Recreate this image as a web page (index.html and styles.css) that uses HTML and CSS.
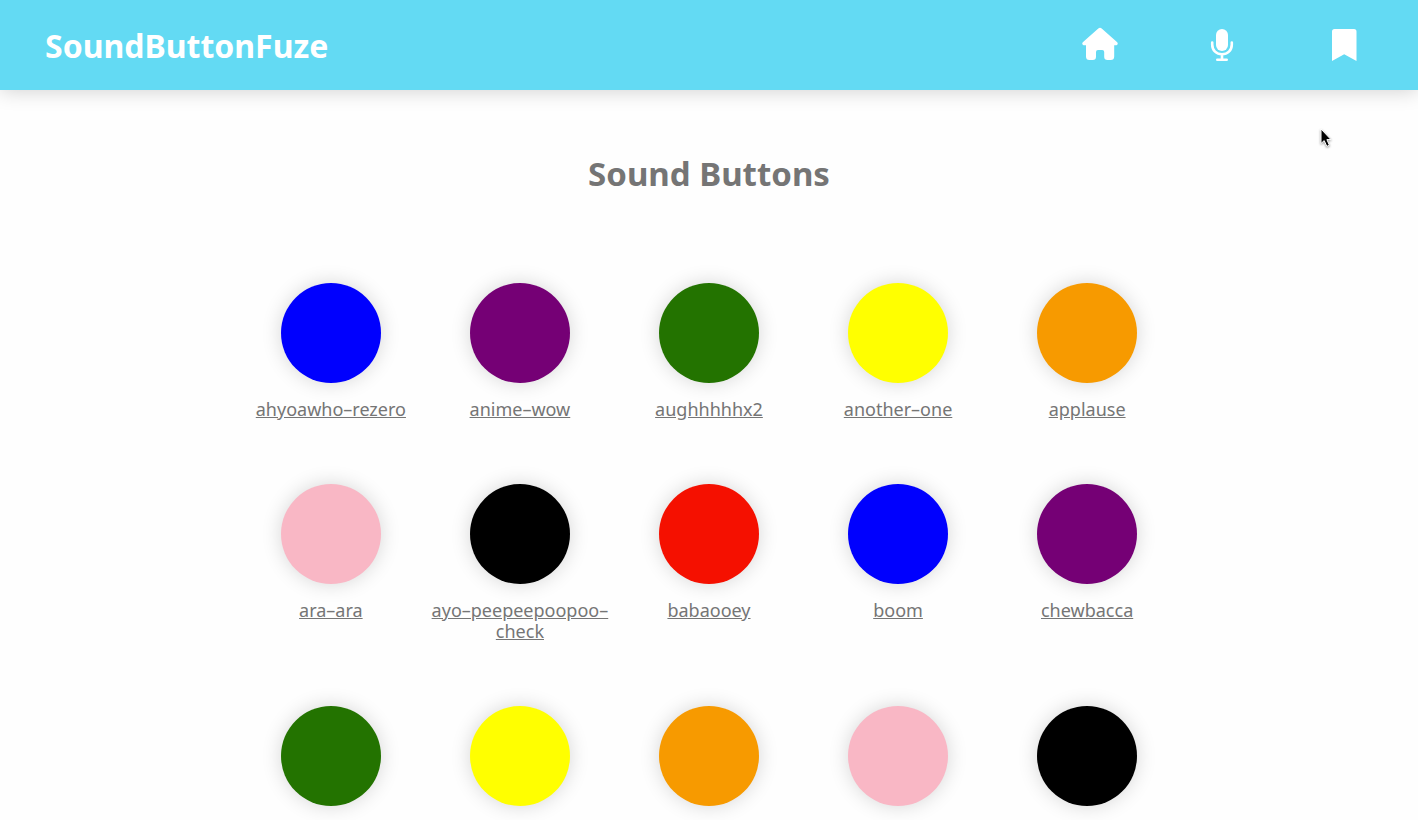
FILE: index.html
```
<!DOCTYPE html>
<html lang="en">
<head>
<meta charset="utf-8">
<title>SoundButtonFuze</title>
<link rel="stylesheet" href="styles.css">
</head>
<body>
<header class="topbar">
  <a class="brand" href="#">SoundButtonFuze</a>
  <nav class="nav">
    <a class="nav-link" href="#" aria-label="Home"><svg class="icon" viewBox="0 0 36 36"><path d="M16.3 1.6Q18 .1 19.7 1.6L35.2 15.2Q36.4 16.6 35 17.9Q34.4 18.3 33.5 18.3H32.2V29.5Q32.2 33 28.7 33H25.5Q22.2 33 22.2 29.8V25Q22.2 23 20.2 23H16Q14 23 14 25V29.8Q14 33 10.7 33H7.4Q4 33 4 29.5V18.3H2.5Q1.6 18.3 1 17.9Q-.4 16.6.8 15.2Z"/></svg></a>
    <a class="nav-link" href="#" aria-label="Record"><svg class="icon" viewBox="0 0 36 36"><rect x="12" y="2" width="12" height="22" rx="6"/><path class="stroke" d="M8.2 15.5V17.5C8.2 23.5 12.5 27.3 18 27.3S27.8 23.5 27.8 17.5V15.5M18 27.3V32.8M13.3 32.8H22.7"/></svg></a>
    <a class="nav-link" href="#" aria-label="Bookmarks"><svg class="icon" viewBox="0 0 36 36"><path d="M6 34V4.5Q6 2 8.5 2H28Q30.5 2 30.5 4.5V34L18.2 27.3Z"/></svg></a>
  </nav>
</header>
<main class="content">
  <h1 class="heading">Sound Buttons</h1>
  <div class="grid">
    <div class="sound"><button class="pad blue" aria-labelledby="s1"></button><a class="label" id="s1" href="#">ahyoawho–rezero</a></div>
    <div class="sound"><button class="pad purple" aria-labelledby="s2"></button><a class="label" id="s2" href="#">anime–wow</a></div>
    <div class="sound"><button class="pad green" aria-labelledby="s3"></button><a class="label" id="s3" href="#">aughhhhhx2</a></div>
    <div class="sound"><button class="pad yellow" aria-labelledby="s4"></button><a class="label" id="s4" href="#">another–one</a></div>
    <div class="sound"><button class="pad orange" aria-labelledby="s5"></button><a class="label" id="s5" href="#">applause</a></div>
    <div class="sound"><button class="pad pink" aria-labelledby="s6"></button><a class="label" id="s6" href="#">ara–ara</a></div>
    <div class="sound"><button class="pad black" aria-labelledby="s7"></button><a class="label" id="s7" href="#">ayo–peepeepoopoo–check</a></div>
    <div class="sound"><button class="pad red" aria-labelledby="s8"></button><a class="label" id="s8" href="#">babaooey</a></div>
    <div class="sound"><button class="pad blue" aria-labelledby="s9"></button><a class="label" id="s9" href="#">boom</a></div>
    <div class="sound"><button class="pad purple" aria-labelledby="s10"></button><a class="label" id="s10" href="#">chewbacca</a></div>
    <div class="sound"><button class="pad green"></button></div>
    <div class="sound"><button class="pad yellow"></button></div>
    <div class="sound"><button class="pad orange"></button></div>
    <div class="sound"><button class="pad pink"></button></div>
    <div class="sound"><button class="pad black"></button></div>
  </div>
</main>
<svg class="cursor" viewBox="0 0 12 20"><path d="M1 1V15.5L4.2 12.6L6.8 18.4L9.4 17.2L6.9 11.6H11Z"/></svg>
</body>
</html>
```
FILE: styles.css
```
* { box-sizing: border-box; }
body {
  margin: 0;
  min-height: 100vh;
  background: #fefefe;
  color: #757575;
  font-family: "Lucida Grande", "Noto Sans", sans-serif;
}
.topbar {
  display: flex;
  align-items: center;
  justify-content: space-between;
  height: 90px;
  padding: 0 56px 0 45px;
  background: #63daf3;
  box-shadow: 0 0 20px rgba(0, 0, 0, 0.2);
}
.brand {
  color: #fff;
  font-size: 32px;
  font-weight: 700;
  text-decoration: none;
}
.nav { display: flex; gap: 86px; }
.nav-link { display: block; }
.icon {
  display: block;
  width: 36px;
  height: 36px;
  fill: #fff;
}
.stroke {
  fill: none;
  stroke: #fff;
  stroke-width: 2.6;
  stroke-linecap: round;
}
.heading {
  margin: 60px 0 86px;
  font-size: 33px;
  line-height: 47px;
  font-weight: 700;
  text-align: center;
}
.grid {
  display: grid;
  grid-template-columns: repeat(5, 1fr);
  row-gap: 64px;
  width: 66.6667%;
  margin: 0 auto;
  padding-bottom: 14px;
}
.sound {
  display: flex;
  flex-direction: column;
  align-items: center;
  gap: 16px;
}
.pad {
  width: 100px;
  height: 100px;
  padding: 0;
  border: 0;
  border-radius: 50%;
  box-shadow: 0 0 20px rgba(0, 0, 0, 0.16);
}
.label {
  color: inherit;
  font-size: 18px;
  line-height: 21px;
  text-align: center;
  text-decoration: underline;
}
.blue { background: #0000fe; }
.purple { background: #750075; }
.green { background: #237300; }
.yellow { background: #ffff00; }
.orange { background: #f79a00; }
.pink { background: #f9b7c5; }
.black { background: #000; }
.red { background: #f51000; }
.cursor {
  position: absolute;
  top: 128px;
  left: 1320px;
  width: 12px;
  height: 20px;
  stroke: #fff;
  stroke-width: 1;
  filter: drop-shadow(0 1px 1px rgba(0, 0, 0, 0.4));
}
```
